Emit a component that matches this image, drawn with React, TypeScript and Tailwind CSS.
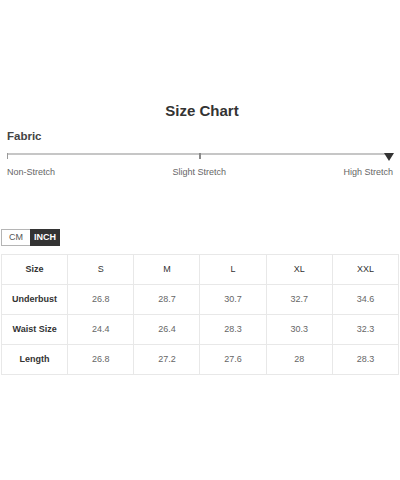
import React from "react";

const sizes = ["S", "M", "L", "XL", "XXL"];

const rows: { label: string; values: string[] }[] = [
  { label: "Underbust", values: ["26.8", "28.7", "30.7", "32.7", "34.6"] },
  { label: "Waist Size", values: ["24.4", "26.4", "28.3", "30.3", "32.3"] },
  { label: "Length", values: ["26.8", "27.2", "27.6", "28", "28.3"] },
];

// Stretch scale with the marker sitting on "High Stretch"
const StretchBar: React.FC = () => (
  <div className="mx-[7px]">
    <div className="relative h-[8px]">
      <div className="h-[2px] bg-[#c6c6c6]" />
      <div className="absolute left-0 top-0 h-[6px] w-px bg-[#9a9a9a]" />
      <div className="absolute left-1/2 top-0 h-[6px] w-[2px] -translate-x-1/2 bg-[#8a8a8a]" />
      <div className="absolute right-[-1px] top-0 h-0 w-0 border-x-[5px] border-t-[8px] border-x-transparent border-t-[#333]" />
    </div>
    <div className="mt-[5px] flex justify-between text-[9px] leading-[12px] text-[#666]">
      <span>Non-Stretch</span>
      <span>Slight Stretch</span>
      <span>High Stretch</span>
    </div>
  </div>
);

export default function App() {
  return (
    <div
      className="h-[480px] w-[400px] bg-white"
      style={{ fontFamily: '"Liberation Sans", Arial, sans-serif' }}
    >
      <div className="pt-[102px] pl-[4px] text-center text-[15px] font-bold leading-[18px] text-[#333]">
        Size Chart
      </div>
      <div className="mt-[9px] px-[7px] text-[11.5px] font-bold leading-[14px] text-[#444]">
        Fabric
      </div>
      <div className="mt-[10px]">
        <StretchBar />
      </div>

      {/* unit toggle */}
      <div className="ml-px mt-[51px] flex h-[17px] w-fit text-[9px]">
        <div className="flex w-[29px] items-center justify-center border border-r-0 border-[#b5b5b5] text-[#555]">
          CM
        </div>
        <div className="flex w-[30px] items-center justify-center bg-[#333] font-bold text-white">
          INCH
        </div>
      </div>

      {/* size table */}
      <div className="mx-px mt-[8px] grid grid-cols-6 border-l border-t border-[#e8e8e8] text-[9px]">
        <div className="flex h-[30px] items-center justify-center border-b border-r border-[#e8e8e8] font-bold text-[#333]">
          Size
        </div>
        {sizes.map((s) => (
          <div
            key={s}
            className="flex h-[30px] items-center justify-center border-b border-r border-[#e8e8e8] text-[#333]"
          >
            {s}
          </div>
        ))}
        {rows.map((r) => (
          <React.Fragment key={r.label}>
            <div className="flex h-[30px] items-center justify-center border-b border-r border-[#e8e8e8] font-bold text-[#333]">
              {r.label}
            </div>
            {r.values.map((v, i) => (
              <div
                key={i}
                className="flex h-[30px] items-center justify-center border-b border-r border-[#e8e8e8] text-[#666]"
              >
                {v}
              </div>
            ))}
          </React.Fragment>
        ))}
      </div>
    </div>
  );
}
